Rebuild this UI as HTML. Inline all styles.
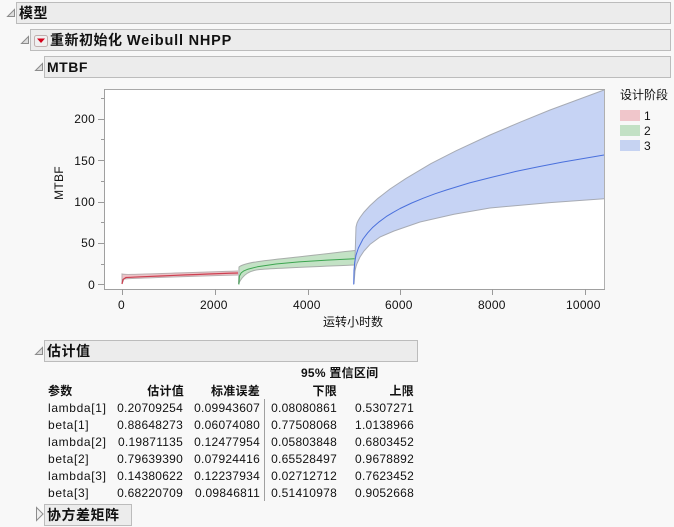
<!DOCTYPE html>
<html><head><meta charset="utf-8"><style>
html,body{margin:0;padding:0;background:#f8f8f8}
#p{position:relative;width:674px;height:527px;overflow:hidden;background:#f8f8f8;font-family:"Liberation Sans","Noto Sans CJK SC",sans-serif;color:#111}
.h{position:absolute;box-sizing:border-box;background:#ececec;border:1px solid #bcbcbc;height:22px;font-weight:bold;font-size:14px;line-height:20px;padding-left:2px;white-space:nowrap;letter-spacing:.5px}
.t{position:absolute;font-size:12px;line-height:16px;white-space:nowrap;letter-spacing:.25px}
.c{letter-spacing:0}
.l{letter-spacing:.65px}
.r{text-align:right}
.b{font-weight:bold}
svg{position:absolute;left:0;top:0}
</style></head><body><div id="p">
<div class="h" style="left:16px;top:2px;width:655px">模型</div>
<div class="h" style="left:30px;top:29px;width:641px;padding-left:19px">重新初始化 <span style="font-size:14.5px;letter-spacing:.8px">Weibull NHPP</span></div>
<div class="h" style="left:44px;top:56px;width:627px">MTBF</div>
<div class="h" style="left:44px;top:340px;width:374px">估计值</div>
<div class="h" style="left:44px;top:504px;width:88px">协方差矩阵</div>
<svg width="674" height="527" viewBox="0 0 674 527">
<g fill="#dcdcdc" stroke="#8c8c8c" stroke-width="1">
<path d="M14.500 9.500V16.500H7.500Z"/><path d="M28.500 36.500V43.500H21.500Z"/><path d="M42.500 63.500V70.500H35.500Z"/><path d="M42.500 347.500V354.500H35.500Z"/><path d="M36.500 507.500V520.500L43 514Z" fill="#f0f0f0"/>
</g>
<rect x="34.500" y="35.500" width="13" height="11" rx="2" fill="#f0f0f0" stroke="#c0b0b0"/>
<path d="M37 38.500H45L41 43Z" fill="#d4001a"/>
<rect x="104.500" y="89.500" width="500" height="200" fill="#fff"/>
<path d="M122 284 122 274C124 275 130 274.500 238 271L238 275C180 276.500 130 278.500 124 279L122 284Z" fill="#eec3c8"/>
<path d="M122 284 122 274C124 275 130 274.500 238 271M238 275C180 276.500 130 278.500 124 279L122 284" fill="none" stroke="#bcaeb0" stroke-width="1"/>
<path d="M122 284 123 279.500 126 277.500C150 276.500 190 274.500 238 273" fill="none" stroke="#cc3f50" stroke-width="1.200"/>
<path d="M238.500 284 239 267C245 262 270 260 300 256.700S340 252 355 250.500V265C320 266.500 280 268 260 269.500C250 270.500 243 274 238.500 284Z" fill="#c3e2c5"/>
<path d="M238.500 284 239 267C245 262 270 260 300 256.700S340 252 355 250.500M355 265C320 266.500 280 268 260 269.500C250 270.500 243 274 238.500 284" fill="none" stroke="#a8aeaa" stroke-width="1"/>
<path d="M238.900 284.500 239.400 276.100 241.200 272.900 243.500 271.100 248.200 269.100 257.400 266.800 276 264 299 261.900 327 260.100 354.800 258.700" fill="none" stroke="#3ca550" stroke-width="1" stroke-linejoin="round"/>
<path d="M354 284 355 258 356 227 357 223.100 358 220.900 360 217.500 364 212.100 370 205.600 378 198.300 390 189 406 178.400 431 163.600 456 150.800 490 135 521 121.800 550 110 576 100.400 604 90V198.700L550 202.600 490 208 454 214.300 420 222 394 231 380 237 370 244.400 364 251 360 257 357 263.500 356 266.500 355 271Z" fill="#c6d3f4"/>
<path d="M354 284 355 258 356 227 357 223.100 358 220.900 360 217.500 364 212.100 370 205.600 378 198.300 390 189 406 178.400 431 163.600 456 150.800 490 135 521 121.800 550 110 576 100.400 604 90M604 198.700 550 202.600 490 208 454 214.300 420 222 394 231 380 237 370 244.400 364 251 360 257 357 263.500 356 266.500 355 271 354 284" fill="none" stroke="#a7abb4" stroke-width="1" stroke-linejoin="round"/>
<path d="M353.700 284.500 354 270.400 354.700 262.600 356 255.200 358.400 248 363 239 367.700 232.800 372.300 227.800 379.200 221.800 386.200 216.600 393.100 212.400 400.100 208.500 411.700 203 423.300 198.200 434.900 193.800 446.400 190 469.600 182.900 492.800 177 516 171.400 539.100 166.600 562.300 162.100 604 155" fill="none" stroke="#4a70dc" stroke-width="1" stroke-linejoin="round"/>
<path d="M104.500 89.500H604.500V289.500" fill="none" stroke="#a8a8a8" stroke-width="1"/>
<path d="M104.500 89V289.500H605" fill="none" stroke="#a0a0a0" stroke-width="1"/>
<path d="M604.500 90V289" fill="none" stroke="#b0b0b0" stroke-width="1"/>
<g stroke="#9a9a9a" stroke-width="1" fill="none">
<path d="M98 284.500H104M98 243.500H104M98 202.500H104M98 160.500H104M98 119.500H104"/>
<path d="M101 264.500H104M101 222.500H104M101 181.500H104M101 139.500H104M101 98.500H104"/>
<path d="M122.500 289V295M215.500 289V295M308.500 289V295M400.500 289V295M492.500 289V295M585.500 289V295"/>
</g>
<rect x="620" y="110" width="20" height="11" fill="#f0c6cb"/>
<rect x="620" y="125" width="20" height="11" fill="#c3e1c5"/>
<rect x="620" y="140" width="20" height="11" fill="#c6d3f2"/>
<path d="M264.500 399V501" stroke="#a0a0a0" stroke-width="1"/>
</svg>
<div class="t r" style="right:579px;top:111px">200</div>
<div class="t r" style="right:579px;top:153px">150</div>
<div class="t r" style="right:579px;top:194px">100</div>
<div class="t r" style="right:579px;top:235px">50</div>
<div class="t r" style="right:579px;top:277px">0</div>
<div class="t" style="left:118px;top:297px">0</div>
<div class="t" style="left:200px;top:297px">2000</div>
<div class="t" style="left:293px;top:297px">4000</div>
<div class="t" style="left:385px;top:297px">6000</div>
<div class="t" style="left:478px;top:297px">8000</div>
<div class="t" style="left:566px;top:297px">10000</div>
<div class="t c" style="left:323px;top:314px">运转小时数</div>
<div class="t" style="left:39px;top:175px;width:40px;text-align:center;transform:rotate(-90deg)">MTBF</div>
<div class="t c" style="left:620px;top:87px">设计阶段</div>
<div class="t" style="left:644px;top:108px">1</div>
<div class="t" style="left:644px;top:123px">2</div>
<div class="t" style="left:644px;top:138px">3</div>

<div class="t b" style="left:301px;top:365px">95% 置信区间</div>
<div class="t b" style="left:48px;top:383px">参数</div>
<div class="t b r" style="right:490px;top:383px">估计值</div>
<div class="t b r" style="right:414px;top:383px">标准误差</div>
<div class="t b r" style="right:337px;top:383px">下限</div>
<div class="t b r" style="right:260px;top:383px">上限</div>

<div class="t l" style="left:48px;top:400px">lambda[1]</div><div class="t r" style="right:491px;top:400px">0.20709254</div><div class="t r" style="right:414px;top:400px">0.09943607</div><div class="t r" style="right:337px;top:400px">0.08080861</div><div class="t r" style="right:260px;top:400px">0.5307271</div>
<div class="t l" style="left:48px;top:417px">beta[1]</div><div class="t r" style="right:491px;top:417px">0.88648273</div><div class="t r" style="right:414px;top:417px">0.06074080</div><div class="t r" style="right:337px;top:417px">0.77508068</div><div class="t r" style="right:260px;top:417px">1.0138966</div>
<div class="t l" style="left:48px;top:434px">lambda[2]</div><div class="t r" style="right:491px;top:434px">0.19871135</div><div class="t r" style="right:414px;top:434px">0.12477954</div><div class="t r" style="right:337px;top:434px">0.05803848</div><div class="t r" style="right:260px;top:434px">0.6803452</div>
<div class="t l" style="left:48px;top:451px">beta[2]</div><div class="t r" style="right:491px;top:451px">0.79639390</div><div class="t r" style="right:414px;top:451px">0.07924416</div><div class="t r" style="right:337px;top:451px">0.65528497</div><div class="t r" style="right:260px;top:451px">0.9678892</div>
<div class="t l" style="left:48px;top:468px">lambda[3]</div><div class="t r" style="right:491px;top:468px">0.14380622</div><div class="t r" style="right:414px;top:468px">0.12237934</div><div class="t r" style="right:337px;top:468px">0.02712712</div><div class="t r" style="right:260px;top:468px">0.7623452</div>
<div class="t l" style="left:48px;top:485px">beta[3]</div><div class="t r" style="right:491px;top:485px">0.68220709</div><div class="t r" style="right:414px;top:485px">0.09846811</div><div class="t r" style="right:337px;top:485px">0.51410978</div><div class="t r" style="right:260px;top:485px">0.9052668</div>
</div></body></html>
